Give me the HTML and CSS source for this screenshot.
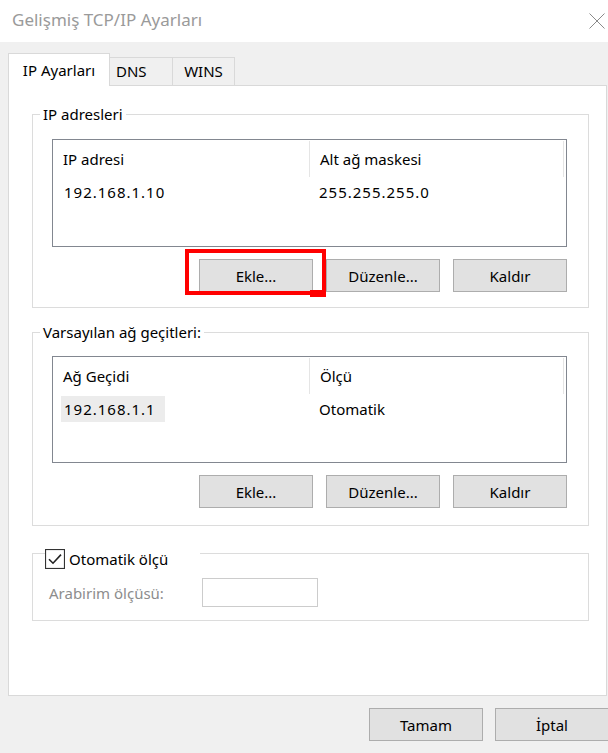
FILE: index.html
```html
<!DOCTYPE html>
<html lang="tr">
<head>
  <meta charset="utf-8" />
  <title>Gelişmiş TCP/IP Ayarları</title>
  <link rel="stylesheet" href="styles.css">
</head>
<body>

<div class="titlebar">
  <span class="title">Gelişmiş TCP/IP Ayarları</span>
  <svg class="close" width="18" height="16" viewBox="0 0 18 16">
    <path d="M1.5 0.5 L16.5 15.5 M16.5 0.5 L1.5 15.5" stroke="#8a8a8a" stroke-width="1" fill="none"/>
  </svg>
</div>

<div class="tabs">
  <div class="tab selected">IP Ayarları</div>
  <div class="tab dns">DNS</div>
  <div class="tab wins">WINS</div>
</div>

<div class="panel">

  <div class="group first">
    <div class="group-title">IP adresleri</div>
    <div class="listview">
      <div class="lv-head">
        <div class="col c1">IP adresi</div>
        <div class="col c2">Alt ağ maskesi</div>
      </div>
      <div class="lv-row">
        <div class="col c1"><span class="item addr">192.168.1.10</span></div>
        <div class="col c2"><span class="item addr">255.255.255.0</span></div>
      </div>
    </div>
    <div class="buttons">
      <div class="marked">
        <button class="btn">Ekle...</button>
        <span class="mark"></span>
      </div>
      <button class="btn">Düzenle...</button>
      <button class="btn">Kaldır</button>
    </div>
  </div>

  <div class="group second">
    <div class="group-title">Varsayılan ağ geçitleri:</div>
    <div class="listview">
      <div class="lv-head">
        <div class="col c1">Ağ Geçidi</div>
        <div class="col c2">Ölçü</div>
      </div>
      <div class="lv-row">
        <div class="col c1"><span class="item addr focused">192.168.1.1</span></div>
        <div class="col c2"><span class="item">Otomatik</span></div>
      </div>
    </div>
    <div class="buttons">
      <button class="btn">Ekle...</button>
      <button class="btn">Düzenle...</button>
      <button class="btn">Kaldır</button>
    </div>
  </div>

  <div class="group third">
    <div class="group-title check-title">
      <span class="checkbox">
        <svg width="20" height="20" viewBox="0 0 20 20">
          <rect x="0.5" y="0.5" width="19" height="19" fill="#fff" stroke="#333" stroke-width="1.2"/>
          <path d="M4 10.2 L8 14.2 L16 5.6" stroke="#222" stroke-width="1.6" fill="none"/>
        </svg>
      </span>
      Otomatik ölçü
    </div>
    <div class="metric-row">
      <span class="disabled">Arabirim ölçüsü:</span>
      <span class="textbox"></span>
    </div>
  </div>

</div>

<div class="dialog-buttons">
  <button class="btn">Tamam</button>
  <button class="btn">İptal</button>
</div>

</body>
</html>
```

FILE: styles.css
```css
html, body {
  height: 100%;
}
body {
  margin: 0;
  overflow: hidden;
  background: #f0f0f0;
  color: #000;
  font: 15px "Noto Sans", "Open Sans", sans-serif;
}

/* window caption */
.titlebar {
  height: 42px;
  background: #fff;
  display: flex;
  align-items: center;
  justify-content: space-between;
  padding: 0 2px 3px 12px;
  box-sizing: border-box;
}
.title {
  font-size: 17px;
  color: #9a9a9a;
}
.close {
  margin-top: 3px;
}

/* tab strip */
.tabs {
  display: flex;
  align-items: flex-end;
  height: 32px;
  margin-top: 11px;
  padding-left: 8px;
}
.tab {
  height: 28px;
  line-height: 27px;
  box-sizing: border-box;
  border: 1px solid #d9d9d9;
  border-left: none;
  border-bottom: none;
  background: #f0f0f0;
  text-align: center;
}
.tab.selected {
  position: relative;
  z-index: 1;
  width: 102px;
  height: 33px;
  margin-bottom: -1px;
  line-height: 32px;
  border-left: 1px solid #d9d9d9;
  background: #fff;
}
.tab.dns {
  width: 63px;
  text-align: left;
  padding-left: 6px;
}
.tab.wins {
  width: 62px;
}

/* tab page */
.panel {
  height: 611px;
  box-sizing: border-box;
  margin: 0 1px 0 8px;
  background: #fff;
  border: 1px solid #d9d9d9;
}

.group {
  margin: 0 17px 0 23px;
  border: 1px solid #dcdcdc;
  padding: 0 21px 15px 19px;
}
.group.first {
  margin-top: 28px;
}
.group.second {
  margin-top: 24px;
  padding-bottom: 17px;
}
.group.third {
  margin-top: 27px;
  padding: 0 21px 13px 16px;
}
.group-title {
  width: fit-content;
  height: 20px;
  line-height: 20px;
  margin: -11px 0 0 -12px;
  padding: 0 3px;
  background: #fff;
}

/* list views */
.listview {
  height: 108px;
  box-sizing: border-box;
  margin-top: 15px;
  border: 1px solid #828790;
}
.second .listview {
  margin-top: 14px;
  height: 107px;
}
.lv-head,
.lv-row {
  display: flex;
}
.lv-head {
  height: 38px;
  align-items: center;
  margin-bottom: 1px;
}
.lv-head .col {
  height: 36px;
  line-height: 36px;
  padding-left: 10px;
  border-right: 1px solid #e5e5e5;
}
.lv-row {
  height: 26px;
  line-height: 26px;
}
.col {
  box-sizing: border-box;
  padding-left: 8px;
}
.c1 {
  width: 257px;
}
.c2 {
  width: 254px;
}
.lv-row .c2 {
  padding-left: 6px;
}
.item {
  display: inline-block;
  padding: 0 3px;
}
.item.addr {
  letter-spacing: 1px;
}
.item.focused {
  padding-right: 9px;
  background: #ececec;
}

/* push buttons */
.buttons {
  display: flex;
  justify-content: flex-end;
  gap: 13px;
  margin-top: 12px;
}
.btn {
  width: 114px;
  height: 33px;
  padding: 0;
  font: inherit;
  color: #000;
  background: #e1e1e1;
  border: 1px solid #adadad;
}
.marked {
  position: relative;
  display: flex;
}
.mark {
  position: absolute;
  left: -14px;
  top: -10px;
  width: 141px;
  height: 46px;
  box-sizing: border-box;
  border: 4px solid #ff0000;
}
.mark::after {
  content: "";
  position: absolute;
  right: -4px;
  bottom: -6px;
  width: 16px;
  height: 7px;
  background: #ff0000;
}

/* automatic metric */
.check-title {
  display: flex;
  align-items: center;
  gap: 4px;
  width: 155px;
  margin: -5px 0 0 -4px;
  padding: 0;
}
.checkbox {
  display: flex;
}
.metric-row {
  display: flex;
  align-items: center;
  margin-top: 9px;
}
.disabled {
  width: 153px;
  color: #8d8d8d;
}
.textbox {
  width: 116px;
  height: 29px;
  box-sizing: border-box;
  border: 1px solid #cccccc;
}

/* OK / Cancel */
.dialog-buttons {
  display: flex;
  justify-content: flex-end;
  gap: 12px;
  margin: 12px -1px 0 0;
}
```
